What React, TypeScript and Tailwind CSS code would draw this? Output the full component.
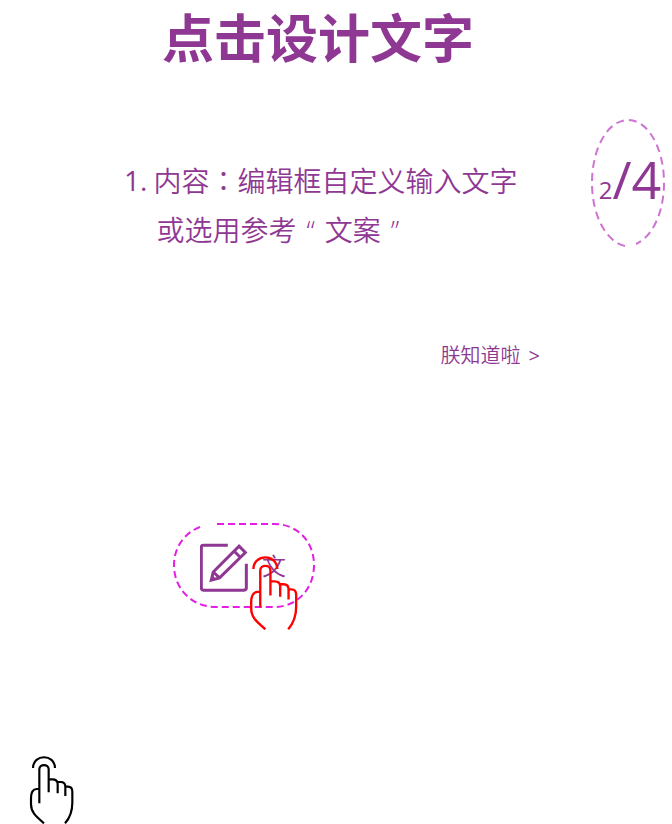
const cjk = "font-['Open_Sans','Noto_Sans_CJK_SC',sans-serif]";

function Hand({ className }: { className: string }) {
  return (
    <svg viewBox="27 18 135 204" className={className} fill="none" stroke="currentColor" strokeWidth="6.5" aria-hidden="true">
      <path d="M39 54C40 11 104 11 105 54" />
      <path d="M58 160V58C58 41 86 41 86 58V127" />
      <path d="M86 88H97Q113 88 113 102V130M113 96H122Q136 96 136 110V138M136 110H144Q157 110 157 125V158C157 185 150 203 135 220" />
      <path d="M58 117H50Q33 118 33 145V163C33 186 46 198 72 220" />
    </svg>
  );
}

function EditIcon() {
  return (
    <svg viewBox="105 85 145 147" className="mt-1 h-[49px] w-12 shrink-0" fill="none" stroke="currentColor" strokeWidth="9" aria-hidden="true">
      <path d="M189 91H115Q109 91 109 97V220Q109 227 115 227H238Q245 227 245 220V147" />
      <path d="M223 94L242 113L164 190L139 197L145 172ZM207 108L228 129M145 172L164 190" />
      <path d="M139 197L143 182L153 193Z" fill="currentColor" stroke="none" />
    </svg>
  );
}

export default function App() {
  return (
    <main className={`${cjk} flex flex-col overflow-hidden bg-white text-[#8f3893]`}>
      <h1 className="pr-9 text-center text-[52px] leading-[76px] font-bold">点击设计文字</h1>

      <section className="mt-[42px] flex items-start justify-between pr-1.5 pl-[124px]">
        <div className="flex gap-1.5 pt-[38px] text-[28px] leading-[49px] font-[350] whitespace-nowrap">
          <span className="font-normal">1.</span>
          <div>
            <p>
              内容<span className="font-['Noto_Sans_CJK_TC',sans-serif]">：</span>编辑框自定义输入文字
            </p>
            <p className="flex gap-2.5 pl-[3px]">
              <span>或选用参考</span>
              <span>“</span>
              <span>文案</span>
              <span>”</span>
            </p>
          </div>
        </div>
        <div className="relative flex h-[130px] w-[76px] shrink-0 items-center justify-center pb-2 pl-1">
          <svg viewBox="0 0 76 130" className="absolute inset-0 size-full" fill="none" stroke="#cd74d2" strokeWidth="2" strokeDasharray="8 5" aria-hidden="true">
            <path d="M35 128C16 124 2 97 2 65C2 30 18 2 38 2S74 30 74 65C74 95 62 119 46 126" />
          </svg>
          <span className="flex items-baseline">
            <span className="text-[24px]">2</span>
            <span className="text-[52px]">/4</span>
          </span>
        </div>
      </section>

      <button type="button" className="mt-[86px] mr-[132px] flex gap-2 self-end text-[20px] leading-[30px] font-[350]">
        <span>朕知道啦</span>
        <span className="font-normal">&gt;</span>
      </button>

      <div className="relative mt-[151px] ml-[172px] h-[87px] w-36">
        <svg viewBox="0 0 144 87" className="absolute inset-0 size-full" fill="none" stroke="#e41ee4" strokeWidth="2" strokeDasharray="7 4" aria-hidden="true">
          <path d="M45 2H102C126 2 142 20 142 43S126 85 102 85H44C20 85 2 67 2 43C2 24 14 9 31 4" />
        </svg>
        <button type="button" className="flex size-full items-center gap-3.5 pl-7 text-[24px] font-[350]">
          <EditIcon />
          文
        </button>
        <Hand className="absolute top-[34px] left-[77px] h-[74px] w-[49px] text-[#ff0000]" />
      </div>

      <Hand className="mt-[147px] ml-[29px] h-[68px] w-[45px] text-black" />
    </main>
  );
}
